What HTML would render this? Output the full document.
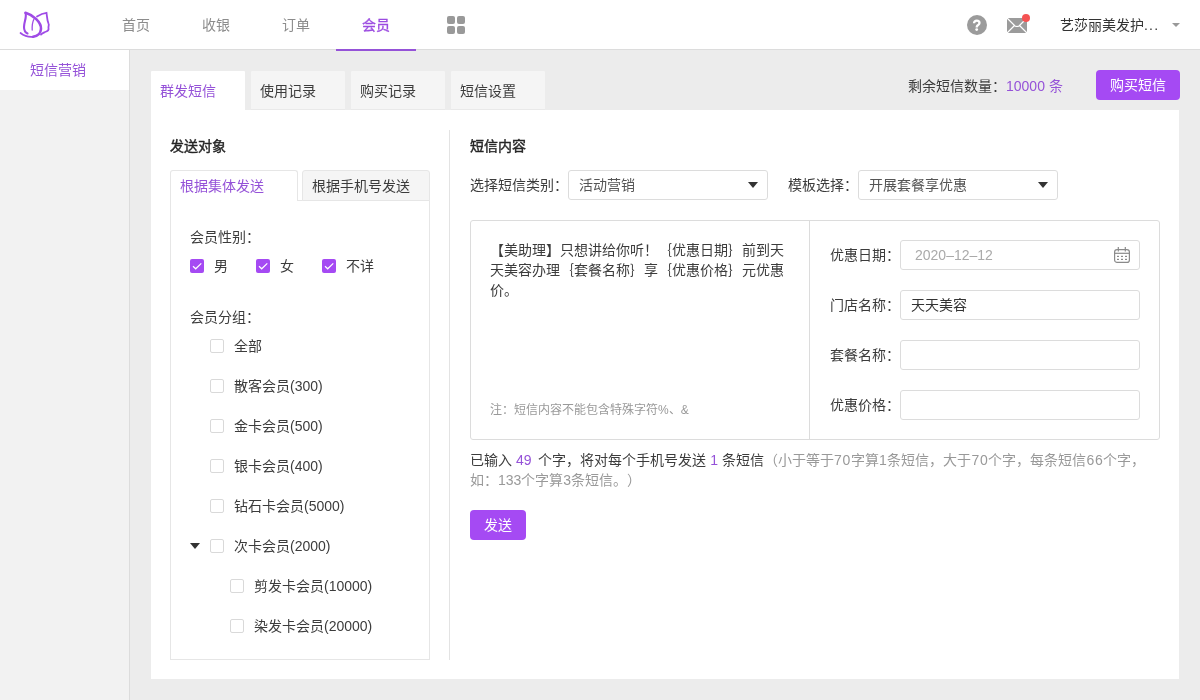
<!DOCTYPE html>
<html lang="zh-CN"><head><meta charset="utf-8">
<style>
*{box-sizing:border-box;margin:0;padding:0}
html,body{width:1200px;height:700px;overflow:hidden}
body{position:relative;text-spacing-trim:space-all;background:#ececec;font-family:"Liberation Sans",sans-serif;font-size:14px;color:#3c3c3c}
.a{position:absolute;white-space:nowrap;line-height:20px;will-change:transform}
.nav,.tab,.btn,.sel,.inp,#sideitem{will-change:transform}
#hdr{position:absolute;left:0;top:0;width:1200px;height:50px;background:#fff;border-bottom:1px solid #dcdcdc}
.nav{position:absolute;top:15px;width:80px;text-align:center;color:#8c8c8c;line-height:20px}
#side{position:absolute;left:0;top:50px;width:130px;height:650px;background:#f2f2f2;border-right:1px solid #dcdcdc}
#sideitem{position:absolute;left:0;top:0;width:129px;height:40px;background:#fff;color:#9552d8;line-height:40px;padding-left:30px}
.tab{position:absolute;top:71px;height:39px;width:94px;background:#f5f5f5;border-radius:1px 1px 0 0;line-height:20px;padding:10px 0 0 9px;color:#3c3c3c;border-bottom:1px solid #e9e9e9}
#card{position:absolute;left:151px;top:110px;width:1028px;height:569px;background:#fff}
.purple{color:#9552d8}
.btn{position:absolute;background:#a54af3;color:#fff;border-radius:4px;text-align:center;line-height:30px;height:30px}
.cb{position:absolute;width:14px;height:14px;border:1px solid #d9d9d9;border-radius:2px;background:#fff}
.cbon{position:absolute;width:14px;height:14px;border-radius:2px;background:#a54af3}
.sel{position:absolute;height:30px;border:1px solid #dcdcdc;border-radius:3px;background:#fff;line-height:28px;padding-left:10px;color:#555}
.tri{position:absolute;width:0;height:0;border-left:5px solid transparent;border-right:5px solid transparent;border-top:6px solid #333}
.inp{position:absolute;left:900px;width:240px;height:30px;border:1px solid #dcdcdc;border-radius:3px;background:#fff;line-height:28px;padding-left:10px;color:#333}
</style></head><body>

<div id="hdr"></div>
<!-- logo -->
<svg class="a" style="left:0;top:0" width="60" height="50" viewBox="0 0 60 50">
<g fill="none" stroke="#9f4be6" stroke-linecap="round">
<path d="M25.5 12.8 C33 15,41.5 22,41 29 C40.7 33,38 36,33 36.8" stroke-width="2.6"/><path d="M33.5 36.8 C28.5 37.4,24 35.8,20.5 33" stroke-width="1.7"/>
<path d="M25.5 13 C27 17,24 22,24 27 C24 30.5,25.5 32.5,27.5 33.5" stroke-width="2.1"/>
<path d="M33.8 19.5 C32.5 22,32 26,32.2 30" stroke-width="1.3"/>
<path d="M37 16.5 C40 14.5,44 13,46.5 12.8 C47 16,47 20,48.5 23.5 C49.5 25,48 26.5,48.5 28 C49 30,47 31.5,45 32 C43.5 32.8,42 33.5,41 34.5" stroke-width="1.8"/>
</g></svg>
<div class="nav" style="left:96px">首页</div>
<div class="nav" style="left:176px">收银</div>
<div class="nav" style="left:256px">订单</div>
<div class="nav" style="left:336px;color:#9b4be0;-webkit-text-stroke:0.3px #9b4be0">会员</div>
<div class="a" style="left:336px;top:49px;width:80px;height:2px;background:#9552d8"></div>
<svg class="a" style="left:447px;top:16px" width="18" height="18" viewBox="0 0 18 18">
<rect x="0" y="0" width="8" height="8" rx="2" fill="#999"/><rect x="10" y="0" width="8" height="8" rx="2" fill="#999"/>
<rect x="0" y="10" width="8" height="8" rx="2" fill="#999"/><rect x="10" y="10" width="8" height="8" rx="2" fill="#999"/>
</svg>
<!-- help -->
<svg class="a" style="left:967px;top:15px" width="20" height="20" viewBox="0 0 20 20">
<circle cx="10" cy="10" r="10" fill="#9b9b9b"/>
<path d="M7 8.3 C7 6.6,8.3 5.6,9.7 5.6 C11.3 5.6,12.5 6.7,12.5 8 C12.5 9.4,11.1 9.9,10.4 10.6 C9.9 11.1,9.7 11.5,9.7 12.5" stroke="#fff" stroke-width="2.3" fill="none"/><circle cx="9.7" cy="14.6" r="1.4" fill="#fff"/>
</svg>
<!-- mail -->
<svg class="a" style="left:1005px;top:12px" width="28" height="24" viewBox="0 0 28 24">
<rect x="2" y="6" width="20" height="15" fill="#9b9b9b"/>
<path d="M2 6 L10 14 Q12 15 14 14 L22 6 M2 21 L9.5 13.5 M22 21 L14.5 13.5" stroke="#fff" stroke-width="1.2" fill="none"/>
<circle cx="21" cy="6" r="4" fill="#f55252"/>
</svg>
<div class="a" style="left:1060px;top:15px;color:#333">艺莎丽美发护<span style="letter-spacing:1.2px">...</span></div>
<div class="tri" style="left:1172px;top:23px;border-top-color:#999;border-left-width:4px;border-right-width:4px;border-top-width:4px"></div>

<div id="side"><div id="sideitem">短信营销</div></div>

<div class="tab" style="left:151px;background:#fff;color:#9552d8;border-bottom:none">群发短信</div>
<div class="tab" style="left:251px">使用记录</div>
<div class="tab" style="left:351px">购买记录</div>
<div class="tab" style="left:451px">短信设置</div>

<div class="a" style="left:908px;top:76px">剩余短信数量：<span class="purple">10000 条</span></div>
<div class="btn" style="left:1096px;top:70px;width:84px">购买短信</div>

<div id="card"></div>

<!-- left section -->
<div class="a" style="left:170px;top:136px;color:#262626;-webkit-text-stroke:0.4px #262626">发送对象</div>
<div class="a" style="left:170px;top:200px;width:260px;height:460px;border:1px solid #e6e6e6;background:#fff"></div>
<div class="a" style="left:170px;top:170px;width:128px;height:31px;border:1px solid #e6e6e6;border-bottom:none;background:#fff;border-radius:3px 3px 0 0"></div>
<div class="a" style="left:302px;top:170px;width:128px;height:31px;border:1px solid #e6e6e6;background:#f5f5f5;border-radius:3px 3px 0 0"></div>
<div class="a" style="left:180px;top:176px;color:#9552d8">根据集体发送</div>
<div class="a" style="left:312px;top:176px">根据手机号发送</div>

<div class="a" style="left:190px;top:227px">会员性别：</div>
<div class="cbon" style="left:190px;top:259px"><svg width="14" height="14" viewBox="0 0 14 14"><path d="M3 7.3 L5.7 9.8 L11.3 4.4" stroke="#fff" stroke-width="1.2" fill="none"/></svg></div>
<div class="a" style="left:214px;top:256px">男</div>
<div class="cbon" style="left:256px;top:259px"><svg width="14" height="14" viewBox="0 0 14 14"><path d="M3 7.3 L5.7 9.8 L11.3 4.4" stroke="#fff" stroke-width="1.2" fill="none"/></svg></div>
<div class="a" style="left:280px;top:256px">女</div>
<div class="cbon" style="left:322px;top:259px"><svg width="14" height="14" viewBox="0 0 14 14"><path d="M3 7.3 L5.7 9.8 L11.3 4.4" stroke="#fff" stroke-width="1.2" fill="none"/></svg></div>
<div class="a" style="left:346px;top:256px">不详</div>

<div class="a" style="left:190px;top:307px">会员分组：</div>
<div class="cb" style="left:210px;top:339px"></div><div class="a" style="left:234px;top:336px">全部</div>
<div class="cb" style="left:210px;top:379px"></div><div class="a" style="left:234px;top:376px">散客会员(300)</div>
<div class="cb" style="left:210px;top:419px"></div><div class="a" style="left:234px;top:416px">金卡会员(500)</div>
<div class="cb" style="left:210px;top:459px"></div><div class="a" style="left:234px;top:456px">银卡会员(400)</div>
<div class="cb" style="left:210px;top:499px"></div><div class="a" style="left:234px;top:496px">钻石卡会员(5000)</div>
<div class="tri" style="left:190px;top:543px"></div>
<div class="cb" style="left:210px;top:539px"></div><div class="a" style="left:234px;top:536px">次卡会员(2000)</div>
<div class="cb" style="left:230px;top:579px"></div><div class="a" style="left:254px;top:576px">剪发卡会员(10000)</div>
<div class="cb" style="left:230px;top:619px"></div><div class="a" style="left:254px;top:616px">染发卡会员(20000)</div>

<div class="a" style="left:449px;top:130px;width:1px;height:530px;background:#e3e3e3"></div>

<!-- right section -->
<div class="a" style="left:470px;top:136px;color:#262626;-webkit-text-stroke:0.4px #262626">短信内容</div>
<div class="a" style="left:470px;top:175px">选择短信类别：</div>
<div class="sel" style="left:568px;top:170px;width:200px">活动营销<div class="tri" style="left:179px;top:11px"></div></div>
<div class="a" style="left:788px;top:175px">模板选择：</div>
<div class="sel" style="left:858px;top:170px;width:200px">开展套餐享优惠<div class="tri" style="left:179px;top:11px"></div></div>

<div class="a" style="left:470px;top:220px;width:690px;height:220px;border:1px solid #dcdcdc;border-radius:3px"></div>
<div class="a" style="left:809px;top:221px;width:1px;height:218px;background:#dcdcdc"></div>
<div class="a" style="left:490px;top:240px;line-height:20px">【美助理】只想讲给你听！｛优惠日期｝前到天<br>天美容办理｛套餐名称｝享｛优惠价格｝元优惠<br>价。</div>
<div class="a" style="left:490px;top:400px;font-size:12px;color:#999">注：短信内容不能包含特殊字符%、&amp;</div>

<div class="a" style="left:830px;top:245px">优惠日期：</div>
<div class="inp" style="top:240px"></div>
<div class="a" style="left:915px;top:245px;color:#aaa">2020–12–12</div>
<svg class="a" style="left:1110px;top:244px" width="24" height="22" viewBox="0 0 24 22">
<g stroke="#8a8a8a" stroke-width="1.2" fill="none">
<rect x="4.6" y="5.6" width="14.8" height="12.8" rx="2.5"/>
<line x1="4.6" y1="9.3" x2="19.4" y2="9.3"/>
<line x1="8.3" y1="3" x2="8.3" y2="7.5"/><line x1="15.3" y1="3" x2="15.3" y2="7.5"/>
</g>
<g fill="#8a8a8a"><rect x="7" y="11.8" width="2" height="1.2"/><rect x="11" y="11.8" width="2" height="1.2"/><rect x="15" y="11.8" width="2" height="1.2"/>
<rect x="7" y="14.8" width="2" height="1.2"/><rect x="11" y="14.8" width="2" height="1.2"/><rect x="15" y="14.8" width="2" height="1.2"/></g>
</svg>
<div class="a" style="left:830px;top:295px">门店名称：</div>
<div class="inp" style="top:290px">天天美容</div>
<div class="a" style="left:830px;top:345px">套餐名称：</div>
<div class="inp" style="top:340px"></div>
<div class="a" style="left:830px;top:395px">优惠价格：</div>
<div class="inp" style="top:390px"></div>

<div class="a" style="left:470px;top:450px">已输入 <span class="purple" style="margin-right:3px">49</span> 个字，将对每个手机号发送 <span class="purple">1</span> 条短信<span style="color:#999">（小于等于<span style="letter-spacing:0.7px">70</span>字算<span style="letter-spacing:0.7px">1</span>条短信，大于<span style="letter-spacing:0.7px">70</span>个字，每条短信<span style="letter-spacing:0.7px">66</span>个字，</span></div>
<div class="a" style="left:470px;top:470px;color:#999">如：133个字算3条短信。）</div>
<div class="btn" style="left:470px;top:510px;width:56px">发送</div>

</body></html>
